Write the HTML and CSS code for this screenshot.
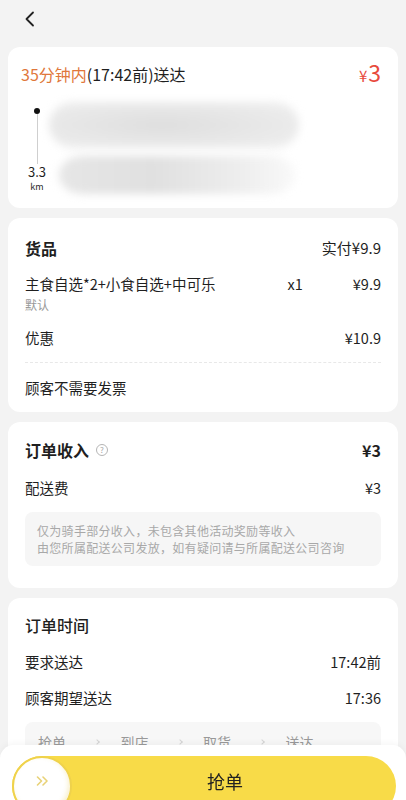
FILE: index.html
```html
<!DOCTYPE html>
<html lang="zh-CN">
<head>
    <meta charset="UTF-8">
    <title>订单详情</title>
    <link rel="stylesheet" href="styles.css">
</head>
<body>
    <header class="top">
        <svg class="back" width="12" height="16" viewBox="0 0 12 16"><path d="M10 1.5L3.5 8L10 14.5" fill="none" stroke="#222" stroke-width="1.8" stroke-linecap="round" stroke-linejoin="round"/></svg>
    </header>

    <main class="cards">
        <section class="card card-head">
            <div class="head-row">
                <span class="eta"><em>35分钟内</em>(17:42前)送达</span>
                <span class="fee"><small>¥</small>3</span>
            </div>
            <div class="route">
                <div class="route-axis">
                    <i class="dot"></i>
                    <i class="stem"></i>
                    <b class="dist">3.3</b>
                    <span class="unit">km</span>
                </div>
                <div class="route-addr">
                    <div class="blur blur-a"></div>
                    <div class="blur blur-b"></div>
                </div>
            </div>
        </section>

        <section class="card card-goods">
            <div class="row title-row">
                <span class="title">货品</span>
                <span class="paid">实付¥9.9</span>
            </div>
            <div class="row item-row">
                <span class="name">主食自选*2+小食自选+中可乐</span>
                <span class="qty">x1</span>
                <span>¥9.9</span>
            </div>
            <div class="spec">默认</div>
            <div class="row discount-row">
                <span>优惠</span>
                <span>¥10.9</span>
            </div>
            <div class="dash"></div>
            <div class="row">
                <span>顾客不需要发票</span>
            </div>
        </section>

        <section class="card card-income">
            <div class="row title-row">
                <span class="title">订单收入<span class="help">?</span></span>
                <span class="title">¥3</span>
            </div>
            <div class="row fee-row">
                <span>配送费</span>
                <span>¥3</span>
            </div>
            <div class="note">
                <p>仅为骑手部分收入，未包含其他活动奖励等收入</p>
                <p>由您所属配送公司发放，如有疑问请与所属配送公司咨询</p>
            </div>
        </section>

        <section class="card card-time">
            <div class="row title-row">
                <span class="title title-light">订单时间</span>
            </div>
            <div class="row time-row">
                <span>要求送达</span>
                <span>17:42前</span>
            </div>
            <div class="row time-row">
                <span>顾客期望送达</span>
                <span>17:36</span>
            </div>
            <div class="steps">
                <div class="step"><span>抢单</span><i class="chev"></i></div>
                <div class="step"><span>到店</span><i class="chev"></i></div>
                <div class="step"><span>取货</span><i class="chev"></i></div>
                <div class="step"><span>送达</span></div>
            </div>
        </section>
    </main>

    <footer class="grab-bar">
        <div class="grab-btn">
            <div class="knob">
                <svg width="13" height="10" viewBox="0 0 13 10"><path d="M1.5 1l4 4-4 4M7 1l4 4-4 4" fill="none" stroke="#e8d277" stroke-width="1.6" stroke-linecap="round" stroke-linejoin="round"/></svg>
            </div>
            <span class="grab-label">抢单</span>
        </div>
    </footer>
</body>
</html>
```

FILE: styles.css
```css
*{
    margin:0;
    padding:0;
    box-sizing:border-box;
}
body{
    background:#f3f3f3;
    font-family:"Noto Sans CJK SC","Noto Sans",sans-serif;
    color:#1f1f1f;
    width:406px;
}
.top{
    height:47px;
    padding:11px 0 0 23px;
}
.back{
    display:block;
}
.cards{
    display:flex;
    flex-direction:column;
    gap:10px;
    padding:0 8px;
}
.card{
    background:#fff;
    border-radius:12px;
    padding:16px 17px;
}

/* 头部配送信息 */
.card-head{
    padding:16px 17px 14px 13px;
}
.head-row{
    display:flex;
    justify-content:space-between;
    align-items:center;
    height:22px;
    font-size:16px;
    line-height:22px;
}
.eta em{
    font-style:normal;
    color:#e0773b;
}
.fee{
    color:#e84a3c;
    font-size:23px;
    line-height:22px;
}
.fee small{
    font-size:15px;
    margin-right:1px;
}
.route{
    display:flex;
    margin-top:8px;
}
.route-axis{
    width:32px;
    display:flex;
    flex-direction:column;
    align-items:center;
    padding-top:15px;
}
.dot{
    width:6px;
    height:6px;
    border-radius:50%;
    background:#111;
}
.stem{
    width:1px;
    height:50px;
    background:#cfcfcf;
}
.dist{
    font-weight:normal;
    font-size:13px;
    line-height:16px;
}
.unit{
    margin-top:2px;
    font-size:9px;
    line-height:10px;
}
.route-addr{
    flex:1;
    padding-top:9px;
}
.blur{
    filter:blur(4px);
    border-radius:24px / 50%;
}
.blur-a{
    width:250px;
    height:46px;
    margin-left:-4px;
    background:radial-gradient(ellipse at 45% 50%,#dedede,#e8e8e8 55%,#f0f0f0);
}
.blur-b{
    width:236px;
    height:38px;
    margin:8px 0 0 6px;
    background:linear-gradient(90deg,#e6e6e6,#e0e0e0 40%,#eeeeee 78%,#f9f9f9);
}

/* 通用行 */
.row{
    display:flex;
    justify-content:space-between;
    align-items:center;
    font-size:14.5px;
    line-height:20px;
}
.title-row{
    font-size:16px;
    line-height:22px;
}
.title{
    font-weight:bold;
    display:flex;
    align-items:center;
}
.title-light{
    font-weight:500;
}
.paid{
    font-size:15px;
}

/* 货品 */
.card-goods{
    padding:19px 17px 14px;
}
.item-row{
    margin-top:15px;
}
.item-row .name{
    flex:1;
}
.qty{
    margin-right:50px;
}
.spec{
    margin-top:3px;
    font-size:12px;
    line-height:16px;
    color:#999;
}
.discount-row{
    margin-top:15px;
}
.dash{
    margin:14px 0 15px;
    border-top:1px dashed #e8e8e8;
}

/* 订单收入 */
.card-income{
    padding:17px 17px 22px;
}
.help{
    width:12px;
    height:12px;
    margin-left:7px;
    border:1px solid #b5b5b5;
    border-radius:50%;
    font-size:8px;
    line-height:10px;
    font-weight:normal;
    color:#a5a5a5;
    text-align:center;
}
.fee-row{
    margin-top:17px;
}
.note{
    margin-top:14px;
    padding:10px 12px;
    background:#f6f6f6;
    border-radius:8px;
    font-size:12px;
    line-height:17px;
    letter-spacing:.3px;
    color:#a8a8a8;
}

/* 订单时间 */
.card-time{
    padding:16px 17px 40px;
}
.time-row{
    margin-top:16px;
}
.steps{
    margin-top:14px;
    padding:10px 13px 40px;
    background:#f7f7f7;
    border-radius:8px;
    display:flex;
    font-size:14px;
    line-height:20px;
    color:#999;
}
.step{
    width:86px;
    display:flex;
    align-items:center;
}
.chev{
    width:4px;
    height:4px;
    margin-left:29px;
    border-top:1px solid #d4d4d4;
    border-right:1px solid #d4d4d4;
    transform:rotate(45deg);
}

/* 底部抢单 */
.grab-bar{
    position:fixed;
    left:0;
    right:0;
    bottom:0;
    height:55px;
    padding:11px 10px 0 12px;
    background:#fff;
    border-radius:14px 14px 0 0;
    box-shadow:0 -2px 6px rgba(0,0,0,.04);
    overflow:hidden;
}
.grab-btn{
    display:flex;
    align-items:flex-start;
    height:60px;
    border-radius:30px;
    background:#f8db48;
}
.knob{
    width:60px;
    height:60px;
    border-radius:50%;
    background:#fff;
    border:2px solid #efd24c;
    box-shadow:inset -2px -2px 4px rgba(230,200,70,.25);
    display:flex;
    justify-content:center;
    padding-top:18px;
}
.knob svg{
    display:block;
}
.grab-label{
    flex:1;
    padding:13px 18px 0 0;
    text-align:center;
    font-size:18px;
    line-height:24px;
    color:#222;
}
```
